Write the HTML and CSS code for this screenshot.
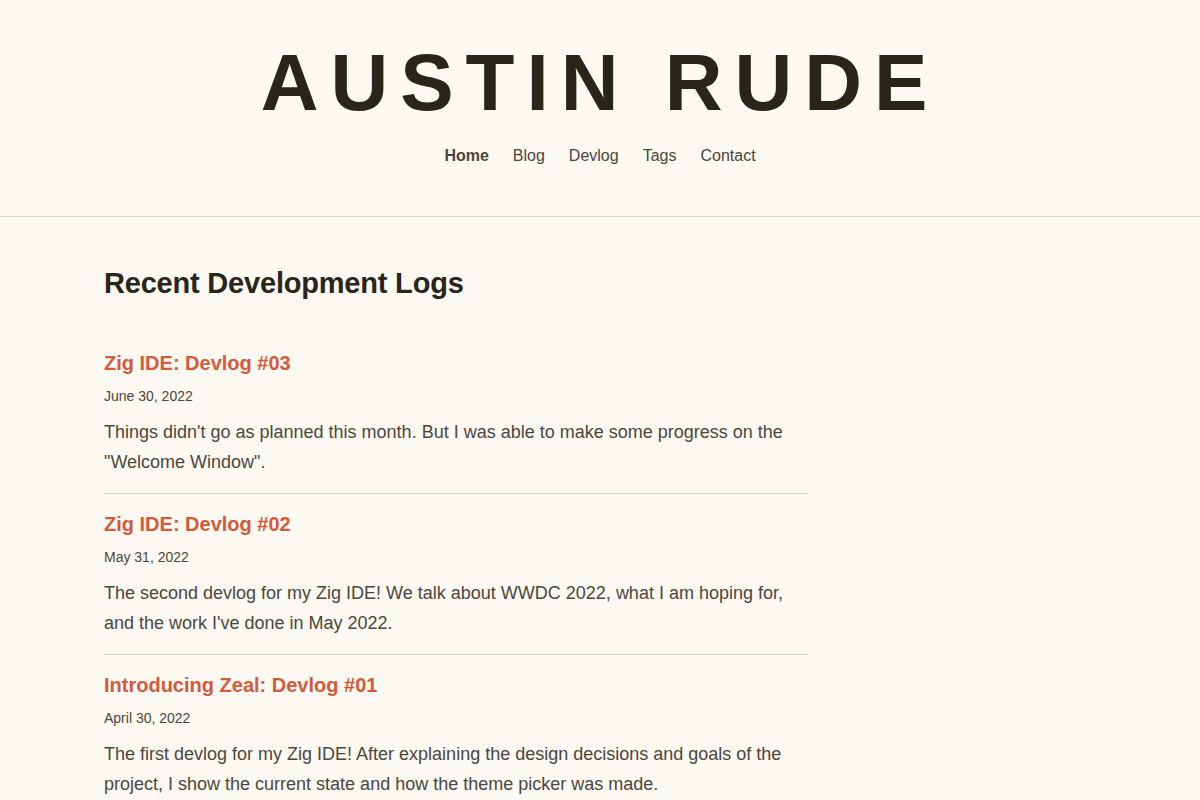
FILE: index.html
```html
<!DOCTYPE html>
<html lang="en">
<head>
<meta charset="utf-8">
<title>Austin Rude</title>
<link rel="stylesheet" href="styles.css">
</head>
<body>
<header class="site-header">
  <h1 class="site-title">AUSTIN RUDE</h1>
  <nav class="site-nav">
    <a class="nav-link active" href="#">Home</a>
    <a class="nav-link" href="#">Blog</a>
    <a class="nav-link" href="#">Devlog</a>
    <a class="nav-link" href="#">Tags</a>
    <a class="nav-link" href="#">Contact</a>
  </nav>
</header>
<main class="container">
  <section class="main-col">
    <h2 class="section-title">Recent Development Logs</h2>
    <ul class="post-list">
      <li class="post">
        <a class="post-title" href="#">Zig IDE: Devlog #03</a>
        <div class="post-date">June 30, 2022</div>
        <p class="post-excerpt">Things didn't go as planned this month. But I was able to make some progress on the "Welcome Window".</p>
      </li>
      <li class="post">
        <a class="post-title" href="#">Zig IDE: Devlog #02</a>
        <div class="post-date">May 31, 2022</div>
        <p class="post-excerpt">The second devlog for my Zig IDE! We talk about WWDC 2022, what I am hoping for, and the work I've done in May 2022.</p>
      </li>
      <li class="post">
        <a class="post-title" href="#">Introducing Zeal: Devlog #01</a>
        <div class="post-date">April 30, 2022</div>
        <p class="post-excerpt">The first devlog for my Zig IDE! After explaining the design decisions and goals of the project, I show the current state and how the theme picker was made.</p>
      </li>
    </ul>
  </section>
</main>
</body>
</html>
```
FILE: styles.css
```css
* { box-sizing: border-box; }
html, body { margin: 0; padding: 0; }
body {
  background: #fcf8f2;
  color: #4d463e;
  font-family: "Liberation Sans", Arial, sans-serif;
}
.site-header {
  padding: 35px 0 48px;
  border-bottom: 1px solid #dcd7d0;
  text-align: center;
}
.site-title {
  margin: 0;
  font-size: 80px;
  line-height: 96px;
  font-weight: 700;
  letter-spacing: 0.15em;
  color: #2a251b;
}
.site-nav {
  margin-top: 13px;
  display: flex;
  justify-content: center;
  gap: 24px;
}
.nav-link {
  font-size: 16px;
  line-height: 24px;
  color: #4d463e;
  text-decoration: none;
}
.nav-link.active { font-weight: 700; }
.container {
  max-width: 992px;
  margin: 0 auto;
}
.main-col { width: 704px; }
.section-title {
  margin: 49px 0 33px;
  font-size: 29px;
  line-height: 34px;
  font-weight: 700;
  letter-spacing: -0.2px;
  color: #2a251b;
}
.post-list { list-style: none; margin: 0; padding: 0; }
.post {
  padding: 16px 0 16px;
  border-bottom: 1px solid #dcd7d0;
}
.post:last-child { border-bottom: none; }
.post-title {
  display: block;
  font-size: 20px;
  line-height: 28px;
  font-weight: 700;
  color: #d35b3b;
  text-decoration: none;
}
.post-date {
  margin-top: 9px;
  font-size: 14px;
  line-height: 20px;
  color: #4d463e;
}
.post-excerpt {
  margin: 11px 0 0;
  font-size: 18px;
  line-height: 30px;
  color: #4d463e;
}
```
